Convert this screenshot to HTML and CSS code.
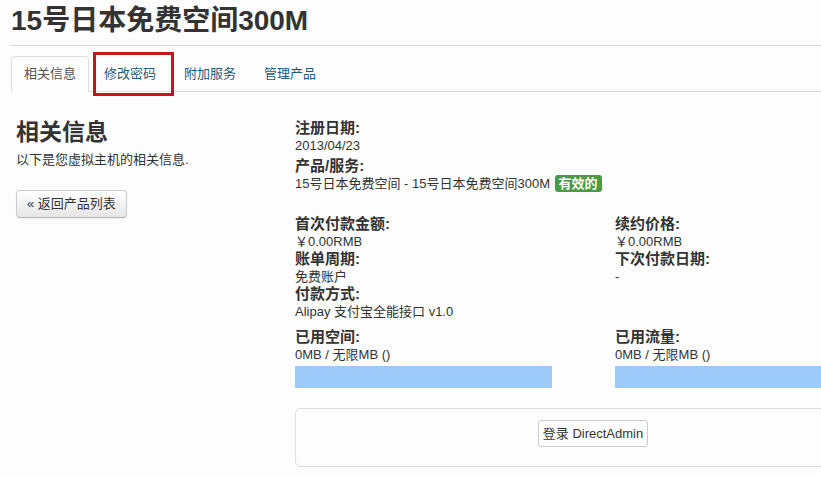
FILE: index.html
```html
<!DOCTYPE html>
<html lang="zh-CN">
<head>
<meta charset="utf-8">
<title>15号日本免费空间300M</title>
<link rel="stylesheet" href="styles.css">
</head>
<body>
<div class="page">
  <h1 class="title">15号日本免费空间300M</h1>
  <ul class="tabs">
    <li class="tab active"><a>相关信息</a></li>
    <li class="tab marked"><a>修改密码</a><span class="mark"></span></li>
    <li class="tab"><a>附加服务</a></li>
    <li class="tab"><a>管理产品</a></li>
  </ul>
  <div class="main">
    <aside class="side">
      <h2 class="side-title">相关信息</h2>
      <p class="side-text">以下是您虚拟主机的相关信息.</p>
      <button class="btn-back">« 返回产品列表</button>
    </aside>
    <section class="details">
      <div class="group-top">
        <div class="label">注册日期:</div>
        <div class="value">2013/04/23</div>
        <div class="label second">产品/服务:</div>
        <div class="value">15号日本免费空间 - 15号日本免费空间300M <span class="badge">有效的</span></div>
      </div>
      <div class="cols billing">
        <div class="col">
          <div class="label">首次付款金额:</div>
          <div class="value">￥0.00RMB</div>
          <div class="label">账单周期:</div>
          <div class="value">免费账户</div>
          <div class="label">付款方式:</div>
          <div class="value">Alipay 支付宝全能接口 v1.0</div>
        </div>
        <div class="col">
          <div class="label">续约价格:</div>
          <div class="value">￥0.00RMB</div>
          <div class="label">下次付款日期:</div>
          <div class="value">-</div>
        </div>
      </div>
      <div class="cols usage">
        <div class="col">
          <div class="label">已用空间:</div>
          <div class="value">0MB / 无限MB ()</div>
          <div class="bar"></div>
        </div>
        <div class="col">
          <div class="label">已用流量:</div>
          <div class="value">0MB / 无限MB ()</div>
          <div class="bar"></div>
        </div>
      </div>
      <div class="login-box">
        <button class="btn-login">登录 DirectAdmin</button>
      </div>
    </section>
  </div>
</div>
</body>
</html>
```

FILE: styles.css
```css
html, body {
  margin: 0;
  padding: 0;
  overflow: hidden;
  background: #fdfdfd;
}

body {
  font-family: "Liberation Sans", "Noto Sans CJK SC", sans-serif;
  font-size: 13px;
  line-height: 18px;
  color: #333;
}

.page {
  width: 900px;
  padding: 4px 0 0 11px;
}

.title {
  margin: 0;
  padding-bottom: 7px;
  font-family: "Liberation Sans", "Noto Sans CJK SC", sans-serif;
  font-size: 28px;
  line-height: 34px;
  font-weight: 700;
  color: #333;
  border-bottom: 1px solid #dcdcdc;
  margin-left: -1px;
  padding-left: 1px;
}

.tabs {
  list-style: none;
  margin: 10px 0 0 0;
  padding: 0;
  display: flex;
  border-bottom: 1px solid #dcdcdc;
}

.tab {
  position: relative;
  margin-right: 2px;
  margin-bottom: -1px;
}

.tab a {
  display: block;
  padding: 8px 12px;
  line-height: 18px;
  border: 1px solid transparent;
  border-radius: 4px 4px 0 0;
  color: #1d5b7e;
}

.tab.active a {
  color: #555;
  background: #fdfdfd;
  border-color: #ddd #ddd transparent;
}

.mark {
  position: absolute;
  left: 2px;
  top: -4px;
  width: 81px;
  height: 44px;
  box-sizing: border-box;
  border: 3px solid #c4161c;
}

.main {
  display: flex;
}

.side {
  width: 279px;
  padding-left: 5px;
}

.side-title {
  margin: 25px 0 0 0;
  font-size: 23px;
  line-height: 30px;
  font-weight: 700;
  color: #333;
}

.side-text {
  margin: 4px 0 0 0;
}

.btn-back {
  margin-top: 21px;
  height: 28px;
  padding: 0 10px;
  font-family: inherit;
  font-size: 13px;
  line-height: 18px;
  color: #333;
  background: linear-gradient(#ffffff, #e6e6e6);
  border: 1px solid #ccc;
  border-bottom-color: #b3b3b3;
  border-radius: 4px;
  box-shadow: inset 0 1px 0 rgba(255,255,255,0.2), 0 1px 2px rgba(0,0,0,0.05);
}

.details {
  width: 596px;
  padding-top: 27px;
}

.label {
  font-size: 15px;
  font-weight: 700;
  color: #333;
}

.group-top .label,
.group-top .value {
  line-height: 18px;
}

.group-top .second {
  margin-top: 2px;
}

.badge {
  display: inline-block;
  margin-left: 1px;
  padding: 1px 4px;
  font-size: 13px;
  line-height: 15px;
  font-weight: 700;
  color: #fff;
  background: #4a9a47;
  border-radius: 3px;
  vertical-align: 0;
}

.cols {
  display: grid;
  grid-template-columns: 320px 1fr;
}

.billing {
  margin-top: 22px;
}

.billing .label,
.billing .value {
  line-height: 17.5px;
}

.usage {
  margin-top: 8px;
}

.bar {
  margin-top: 2px;
  width: 257px;
  height: 22px;
  background: #9ccbf9;
}

.login-box {
  margin-top: 20px;
  height: 57px;
  border: 1px solid #ddd;
  border-radius: 6px;
  box-sizing: content-box;
  display: flex;
  justify-content: center;
  align-items: flex-start;
  padding-top: 0;
}

.btn-login {
  margin-top: 11px;
  height: 27px;
  padding: 0 4px;
  font-family: inherit;
  font-size: 13px;
  line-height: 18px;
  color: #333;
  background: #fff;
  border: 1px solid #ccc;
  border-radius: 3px;
}
```
